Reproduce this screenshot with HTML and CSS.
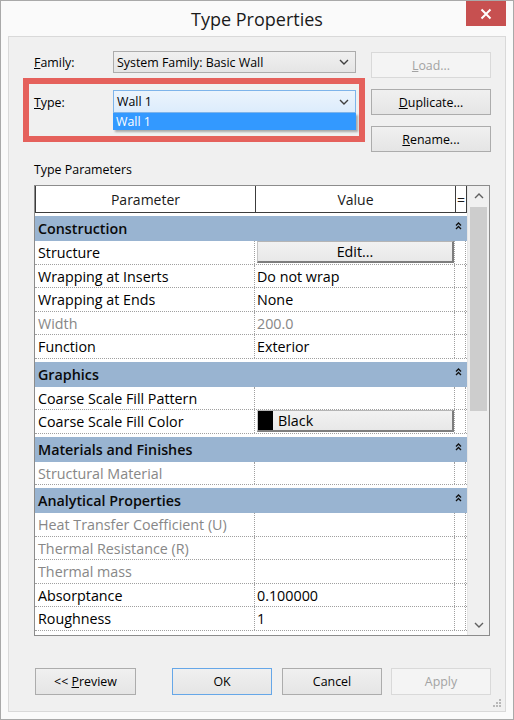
FILE: index.html
```html
<!DOCTYPE html>
<html>
<head>
<meta charset="utf-8">
<link rel="stylesheet" href="styles.css">
</head>
<body>
<div class="window">
  <div class="titlebar">
    <span></span>
    <div class="title">Type Properties</div>
    <div class="close">
      <svg width="12" height="12" viewBox="0 0 12 12"><path d="M1.5 1.5 L10.5 10.5 M10.5 1.5 L1.5 10.5" stroke="#fff" stroke-width="2" fill="none"/></svg>
    </div>
  </div>
  <div class="panel">
    <div class="top">
      <div class="left">
        <div class="field family">
          <div class="lbl"><u>F</u>amily:</div>
          <div class="select"><span>System Family: Basic Wall</span>
            <svg class="arrow" width="10" height="6" viewBox="0 0 10 6"><path d="M1 1 L5 5 L9 1" stroke="#404040" stroke-width="1.4" fill="none"/></svg>
          </div>
        </div>
        <div class="highlight">
          <div class="field">
            <div class="lbl"><u>T</u>ype:</div>
            <div class="select hover"><span>Wall 1</span>
              <svg class="arrow" width="10" height="6" viewBox="0 0 10 6"><path d="M1 1 L5 5 L9 1" stroke="#404040" stroke-width="1.4" fill="none"/></svg>
            </div>
          </div>
          <div class="dropdown">Wall 1</div>
        </div>
      </div>
      <div class="right">
        <div class="btn disabled load"><span><u>L</u>oad...</span></div>
        <div class="btn gap"><span><u>D</u>uplicate...</span></div>
        <div class="btn gap"><span><u>R</u>ename...</span></div>
      </div>
    </div>
    <div class="section-label">Type Parameters</div>
    <div class="grid">
      <div class="rows">
        <div class="hdr">
          <div class="h1">Parameter</div>
          <div class="h2">Value</div>
          <div class="h3">=</div>
        </div>
        <div class="group"><span>Construction</span><svg class="fold" width="7" height="8" viewBox="0 0 7 8"><path d="M1 3.5 L3.5 1 L6 3.5 M1 7 L3.5 4.5 L6 7" stroke="#111" stroke-width="1.3" fill="none"/></svg></div>
        <div class="row"><div class="c1">Structure</div><div class="c2"><div class="cellbtn center">Edit...</div></div><div class="c3"></div></div>
        <div class="row"><div class="c1">Wrapping at Inserts</div><div class="c2">Do not wrap</div><div class="c3"></div></div>
        <div class="row"><div class="c1">Wrapping at Ends</div><div class="c2">None</div><div class="c3"></div></div>
        <div class="row gray"><div class="c1">Width</div><div class="c2">200.0</div><div class="c3"></div></div>
        <div class="row"><div class="c1">Function</div><div class="c2">Exterior</div><div class="c3"></div></div>
        <div class="group"><span>Graphics</span><svg class="fold" width="7" height="8" viewBox="0 0 7 8"><path d="M1 3.5 L3.5 1 L6 3.5 M1 7 L3.5 4.5 L6 7" stroke="#111" stroke-width="1.3" fill="none"/></svg></div>
        <div class="row"><div class="c1">Coarse Scale Fill Pattern</div><div class="c2"></div><div class="c3"></div></div>
        <div class="row"><div class="c1">Coarse Scale Fill Color</div><div class="c2"><div class="cellbtn"><span class="swatch"></span>Black</div></div><div class="c3"></div></div>
        <div class="group"><span>Materials and Finishes</span><svg class="fold" width="7" height="8" viewBox="0 0 7 8"><path d="M1 3.5 L3.5 1 L6 3.5 M1 7 L3.5 4.5 L6 7" stroke="#111" stroke-width="1.3" fill="none"/></svg></div>
        <div class="row gray"><div class="c1">Structural Material</div><div class="c2"></div><div class="c3"></div></div>
        <div class="group"><span>Analytical Properties</span><svg class="fold" width="7" height="8" viewBox="0 0 7 8"><path d="M1 3.5 L3.5 1 L6 3.5 M1 7 L3.5 4.5 L6 7" stroke="#111" stroke-width="1.3" fill="none"/></svg></div>
        <div class="row gray"><div class="c1">Heat Transfer Coefficient (U)</div><div class="c2"></div><div class="c3"></div></div>
        <div class="row gray"><div class="c1">Thermal Resistance (R)</div><div class="c2"></div><div class="c3"></div></div>
        <div class="row gray"><div class="c1">Thermal mass</div><div class="c2"></div><div class="c3"></div></div>
        <div class="row"><div class="c1">Absorptance</div><div class="c2">0.100000</div><div class="c3"></div></div>
        <div class="row"><div class="c1">Roughness</div><div class="c2">1</div><div class="c3"></div></div>
      </div>
      <div class="scrollbar">
        <div class="sb-arrow"><svg width="10" height="6" viewBox="0 0 10 6"><path d="M1 5 L5 1 L9 5" stroke="#606060" stroke-width="1.4" fill="none"/></svg></div>
        <div class="thumb"></div>
        <div class="track"></div>
        <div class="sb-arrow"><svg width="10" height="6" viewBox="0 0 10 6"><path d="M1 1 L5 5 L9 1" stroke="#606060" stroke-width="1.4" fill="none"/></svg></div>
      </div>
    </div>
    <div class="footer">
      <div class="btn fbtn preview"><span>&lt;&lt; <u>P</u>review</span></div>
      <div class="btn fbtn default ok">OK</div>
      <div class="btn fbtn cancel">Cancel</div>
      <div class="btn fbtn disabled apply">Apply</div>
    </div>
    <svg class="grip" width="10" height="10" viewBox="0 0 10 10">
      <rect x="7" y="1" width="2" height="2" fill="#b8b8b8"/>
      <rect x="4" y="4" width="2" height="2" fill="#b8b8b8"/>
      <rect x="7" y="4" width="2" height="2" fill="#b8b8b8"/>
      <rect x="1" y="7" width="2" height="2" fill="#b8b8b8"/>
      <rect x="4" y="7" width="2" height="2" fill="#b8b8b8"/>
      <rect x="7" y="7" width="2" height="2" fill="#b8b8b8"/>
    </svg>
  </div>
</div>
</body>
</html>
```
FILE: styles.css
```css
* { box-sizing: border-box; }
html, body { margin: 0; padding: 0; }
body {
  width: 514px;
  height: 720px;
  font-family: "Open Sans", "Noto Sans", sans-serif;
  font-size: 12.4px;
  color: #000;
  background: #fff;
}
.window {
  width: 514px;
  height: 720px;
  border: 1px solid #a9a9a9;
  background: #fafafa;
  padding: 0 7px 7px 7px;
  display: flex;
  flex-direction: column;
}
.titlebar {
  height: 35px;
  display: grid;
  grid-template-columns: 1fr auto 1fr;
  align-items: start;
}
.title {
  margin-top: 6px;
  font-size: 18px;
  color: #1a1a1a;
  line-height: 24px;
}
.close {
  justify-self: end;
  width: 40px;
  height: 25px;
  background: #c75050;
  display: flex;
  align-items: center;
  justify-content: center;
}
.panel {
  position: relative;
  height: 676px;
  border: 1px solid #d9d9d9;
  background: #f0f0f0;
}
.top {
  display: flex;
  margin-top: 14px;
  margin-left: 14px;
}
.left { width: 342px; }
.field {
  display: flex;
  align-items: center;
}
.family { margin-left: 11px; }
.lbl {
  width: 79px;
  padding-top: 1px;
}
.select {
  width: 243px;
  height: 22px;
  border: 1px solid #acacac;
  background: linear-gradient(#f0f0f0, #e5e5e5);
  display: flex;
  align-items: center;
  justify-content: space-between;
  padding: 0 6px 0 3px;
}
.select.hover {
  height: 23px;
  border-color: #7eb4ea;
  background: linear-gradient(#ecf4fc, #dcecfc);
}
.highlight {
  margin-top: 5px;
  border: 6px solid #e5615c;
  padding: 6px 3px 6px 5px;
}
.dropdown {
  margin-left: 79px;
  width: 243px;
  height: 17px;
  background: #3399ff;
  color: #fff;
  line-height: 17px;
  padding-left: 3px;
  box-shadow: 2px 2px 2px rgba(0,0,0,0.3);
}
.right {
  margin-left: 6px;
  width: 120px;
  padding-top: 1px;
}
.btn {
  height: 26px;
  border: 1px solid #acacac;
  background: linear-gradient(#f0f0f0, #e5e5e5);
  display: flex;
  align-items: center;
  justify-content: center;
  color: #000;
}
.btn.gap { margin-top: 11px; }
.btn.disabled {
  background: #f4f4f4;
  border-color: #d9d9d9;
  color: #a3a3a3;
}
.btn.default { border-color: #66a7e8; }
.section-label {
  margin-top: 9px;
  margin-left: 25px;
  height: 18px;
  line-height: 18px;
}
.grid {
  margin-top: 6px;
  margin-left: 25px;
  width: 456px;
  height: 451px;
  border: 1px solid #8c8c8c;
  background: #fff;
  display: flex;
  font-size: 14.3px;
}
.rows {
  width: 432px;
  overflow: hidden;
}
.hdr {
  display: flex;
  height: 27px;
  border-bottom: 1px solid #3c3c3c;
  border-left: 1px solid #3c3c3c;
  font-size: 14px;
}
.hdr > div {
  display: flex;
  align-items: center;
  justify-content: center;
  border-right: 1px solid #3c3c3c;
  color: #1a1a1a;
  padding-top: 1px;
}
.h1 { width: 220px; }
.h2 { width: 200px; }
.h3 { width: 11px; }
.group {
  height: 28px;
  border-top: 3px solid #fff;
  background: #99b4d1;
  font-weight: 600;
  display: flex;
  justify-content: space-between;
  align-items: flex-start;
  padding: 1px 5px 0 3px;
  line-height: 24px;
  color: #0a0a0a;
}
.fold { margin-top: 5px; }
.row {
  display: flex;
  height: 23.5px;
  border-bottom: 1px dotted #a0a0a0;
}
.row > div {
  border-right: 1px dotted #a0a0a0;
  display: flex;
  align-items: center;
  padding-left: 3px;
  padding-top: 1px;
  white-space: nowrap;
}
.row .c1 { width: 220px; }
.row .c2 { width: 200px; padding-left: 2px; }
.row .c3 { width: 11px; padding: 0; }
.row.gray { color: #878787; }
.cellbtn {
  width: 197px;
  height: 22px;
  margin-top: -1px;
  border-top: 1px solid #b5b5b5;
  border-left: 1px solid #c5c5c5;
  border-right: 2px solid #7d7d7d;
  border-bottom: 2px solid #7d7d7d;
  background: linear-gradient(#f2f2f2, #e8e8e8);
  display: flex;
  align-items: center;
}
.cellbtn.center { justify-content: center; }
.swatch {
  width: 15px;
  height: 19px;
  background: #000;
  margin-right: 5px;
}
.scrollbar {
  width: 22px;
  background: #f0f0f0;
  border-left: 1px solid #e6e6e6;
  display: flex;
  flex-direction: column;
  align-items: center;
}
.sb-arrow {
  height: 20px;
  display: flex;
  align-items: center;
  justify-content: center;
}
.thumb {
  margin-top: 1px;
  width: 17px;
  height: 204px;
  background: #cdcdcd;
}
.track { flex: 1; }
.footer {
  display: flex;
  margin-top: 32px;
  margin-left: 26px;
}
.fbtn { height: 27px; width: 100px; }
.preview { width: 101px; }
.ok { margin-left: 36px; }
.cancel { margin-left: 10px; }
.apply { margin-left: 9px; }
.grip {
  position: absolute;
  right: 3px;
  bottom: 3px;
}
```
